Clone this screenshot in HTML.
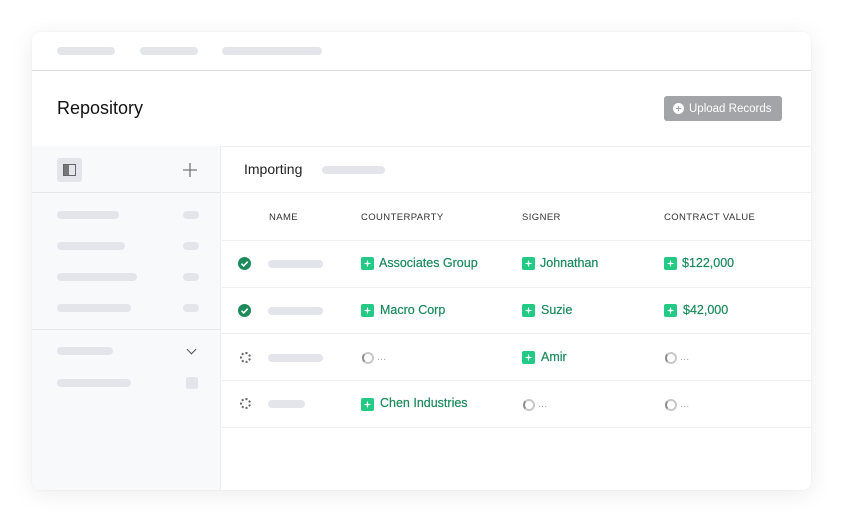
<!DOCTYPE html><html><head><style>
*{margin:0;padding:0;box-sizing:border-box}
body{width:844px;height:523px;background:#fff;font-family:"Liberation Sans",Arial,sans-serif;position:relative;overflow:hidden}
.a{position:absolute}
.card{left:32px;top:32px;width:779px;height:458px;border-radius:8px;background:#fff;box-shadow:0 4px 24px rgba(0,0,0,.08),0 0 2px rgba(0,0,0,.05);overflow:hidden}
.p{position:absolute;height:8px;border-radius:4px;background:#e4e5ea}
.g{color:#1b8a5c;font-size:12.5px;-webkit-text-stroke:.2px #1b8a5c}
.ic{position:absolute;width:13px;height:13px;border-radius:2px;background:#24c985}
.ic::after{content:"";position:absolute;left:2.5px;top:2.5px;width:8px;height:8px;background:#fff;clip-path:polygon(50% 0,60% 40%,100% 50%,60% 60%,50% 100%,40% 60%,0 50%,40% 40%)}
.line{position:absolute;left:190px;right:0;height:1px;background:#eeeff2}
.hd{position:absolute;font-size:9.5px;letter-spacing:.4px;color:#333}
.spin{position:absolute;width:12px;height:12px;border-radius:50%;border:2.5px solid #c8c8cc;border-left-color:#8d8d92}
.dots{position:absolute;color:#aaa;font-size:11px}
.chk{position:absolute;width:13px;height:13px;border-radius:50%;background:#1d8a5c}
.dc{position:absolute;width:11px;height:11px;border-radius:50%;border:2px dotted #666}
</style></head><body>
<div class="a card">
 <div class="p" style="left:25px;top:15px;width:58px"></div>
 <div class="p" style="left:108px;top:15px;width:58px"></div>
 <div class="p" style="left:190px;top:15px;width:100px"></div>
 <div class="a" style="left:0;right:0;top:38px;height:1px;background:#dcdde0"></div>
 <div class="a" style="left:25px;top:66px;font-size:18px;color:#111">Repository</div>
 <div class="a" style="left:632px;top:64px;width:118px;height:25px;border-radius:3px;background:#a3a4a8">
  <span class="a" style="left:25px;top:7px;color:#fff;font-size:11.5px;line-height:12px;white-space:nowrap">Upload Records</span>
  <span class="a" style="left:9px;top:7px;width:11px;height:11px;border-radius:50%;background:#fff"></span>
  <span class="a" style="left:12px;top:11.8px;width:5px;height:1.5px;background:#a3a4a8"></span>
  <span class="a" style="left:13.7px;top:10px;width:1.5px;height:5px;background:#a3a4a8"></span>
 </div>
 <div class="a" style="left:0;top:114px;width:189px;height:344px;background:#f8f9fb;border-right:1px solid #eeeff2"></div>
 <div class="a" style="left:25px;top:126px;width:25px;height:24px;border-radius:3px;background:#e4e5ea"></div>
 <div class="a" style="left:31px;top:132px;width:13px;height:12px;border:1.5px solid #666"></div>
 <div class="a" style="left:32px;top:133px;width:5px;height:10px;background:#777"></div>
 <svg class="a" style="left:150px;top:130px" width="16" height="16"><path d="M8 1v14M1 8h14" stroke="#777" stroke-width="1.3"/></svg>
 <div class="a" style="left:0;top:160px;width:189px;height:1px;background:#e6e7ea"></div>
 <div class="p" style="left:25px;top:179px;width:62px"></div><div class="p" style="left:151px;top:179px;width:16px"></div>
 <div class="p" style="left:25px;top:210px;width:68px"></div><div class="p" style="left:151px;top:210px;width:16px"></div>
 <div class="p" style="left:25px;top:241px;width:80px"></div><div class="p" style="left:151px;top:241px;width:16px"></div>
 <div class="p" style="left:25px;top:272px;width:74px"></div><div class="p" style="left:151px;top:272px;width:16px"></div>
 <div class="a" style="left:0;top:297px;width:189px;height:1px;background:#e6e7ea"></div>
 <div class="p" style="left:25px;top:315px;width:56px"></div>
 <div class="a" style="left:156px;top:314px;width:7px;height:7px;border-right:1.5px solid #555;border-bottom:1.5px solid #555;transform:rotate(45deg)"></div>
 <div class="p" style="left:25px;top:347px;width:74px"></div>
 <div class="a" style="left:154px;top:345px;width:12px;height:12px;border-radius:2px;background:#e4e5ea"></div>
 <div class="a" style="left:212px;top:129px;font-size:14px;color:#222">Importing</div>
 <div class="p" style="left:290px;top:134px;width:63px"></div>
 <div class="line" style="top:114px"></div>
 <div class="line" style="top:160px"></div>
 <div class="hd" style="left:237px;top:180px">NAME</div>
 <div class="hd" style="left:329px;top:180px">COUNTERPARTY</div>
 <div class="hd" style="left:490px;top:180px">SIGNER</div>
 <div class="hd" style="left:632px;top:180px">CONTRACT VALUE</div>
 <div class="line" style="top:208px"></div>
 <div class="line" style="top:255px"></div>
 <div class="line" style="top:301px"></div>
 <div class="line" style="top:348px"></div>
 <div class="line" style="top:395px"></div>
 <div class="chk" style="left:206px;top:225px"><svg width="13" height="13"><path d="M3.5 6.7l2.2 2.2 4-4.2" stroke="#fff" stroke-width="1.6" fill="none"/></svg></div>
 <div class="p" style="left:236px;top:228px;width:55px"></div>
 <div class="ic" style="left:329px;top:225px"></div><div class="a g" style="left:347px;top:224px">Associates Group</div>
 <div class="ic" style="left:490px;top:225px"></div><div class="a g" style="left:508px;top:224px">Johnathan</div>
 <div class="ic" style="left:632px;top:225px"></div><div class="a g" style="left:650px;top:224px">$122,000</div>
 <div class="chk" style="left:206px;top:272px"><svg width="13" height="13"><path d="M3.5 6.7l2.2 2.2 4-4.2" stroke="#fff" stroke-width="1.6" fill="none"/></svg></div>
 <div class="p" style="left:236px;top:275px;width:55px"></div>
 <div class="ic" style="left:329px;top:272px"></div><div class="a g" style="left:348px;top:271px">Macro Corp</div>
 <div class="ic" style="left:490px;top:272px"></div><div class="a g" style="left:509px;top:271px">Suzie</div>
 <div class="ic" style="left:632px;top:272px"></div><div class="a g" style="left:651px;top:271px">$42,000</div>
 <div class="dc" style="left:208px;top:320px"></div>
 <div class="p" style="left:236px;top:322px;width:55px"></div>
 <div class="spin" style="left:330px;top:320px"></div><div class="dots" style="left:345px;top:319px">...</div>
 <div class="ic" style="left:490px;top:319px"></div><div class="a g" style="left:509px;top:318px">Amir</div>
 <div class="spin" style="left:633px;top:320px"></div><div class="dots" style="left:648px;top:319px">...</div>
 <div class="dc" style="left:208px;top:366px"></div>
 <div class="p" style="left:236px;top:368px;width:37px"></div>
 <div class="ic" style="left:329px;top:366px"></div><div class="a g" style="left:348px;top:364px">Chen Industries</div>
 <div class="spin" style="left:491px;top:367px"></div><div class="dots" style="left:506px;top:366px">...</div>
 <div class="spin" style="left:633px;top:367px"></div><div class="dots" style="left:648px;top:366px">...</div>
</div>
</body></html>
